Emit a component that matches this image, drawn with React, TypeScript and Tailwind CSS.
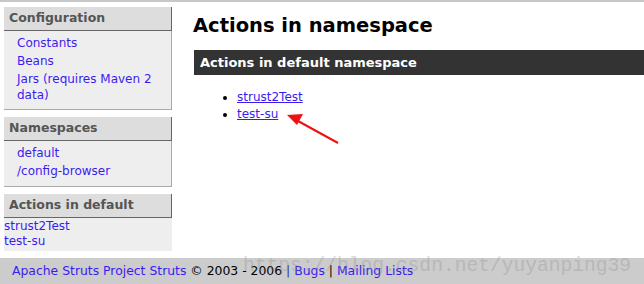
import React from "react";

const linkCls = "text-[#3b1cf0]";

function SideBox({ title, children, plain }: { title: string; children: React.ReactNode; plain?: boolean }) {
  return (
    <div>
      <div className="h-[24px] bg-[#dddddd] border-r border-b border-[#666666] pl-[5px] flex items-center text-[12.5px] font-bold text-[#555555]">
        {title}
      </div>
      <div
        className={
          plain
            ? "bg-[#eeeeee] pt-px pb-[2px]"
            : "bg-[#eeeeee] border-r border-b border-[#aaaaaa] pl-[13px] pt-[3px] pb-[6px]"
        }
      >
        {children}
      </div>
    </div>
  );
}

export default function App() {
  return (
    <div className="relative w-[644px] h-[284px] overflow-hidden bg-white font-['DejaVu_Sans',sans-serif] text-[12px]">
      <div className="h-[2px] bg-[#c8c8c8]" />
      <div className="flex">
        <aside className="ml-[4px] mt-[5px] w-[168px] flex flex-col gap-[7px]">
          <SideBox title="Configuration">
            <div className="leading-[18px]">
              <a className={`${linkCls} block`}>Constants</a>
              <a className={`${linkCls} block`}>Beans</a>
              <a className={`${linkCls} block leading-[16px] pt-px`}>Jars (requires Maven 2 data)</a>
            </div>
          </SideBox>
          <SideBox title="Namespaces">
            <div className="leading-[18px]">
              <a className={`${linkCls} block`}>default</a>
              <a className={`${linkCls} block`}>/config-browser</a>
            </div>
          </SideBox>
          <SideBox title="Actions in default" plain>
            <div className="leading-[15px]">
              <a className={`${linkCls} block`}>strust2Test</a>
              <a className={`${linkCls} block`}>test-su</a>
            </div>
          </SideBox>
        </aside>
        <main className="ml-[21px] flex-1">
          <h1 className="mt-[12px] text-[19.5px] leading-[24px] font-bold text-black">Actions in namespace</h1>
          <div className="mt-[12px] ml-px h-[25px] bg-[#333333] pl-[6px] flex items-center text-[13px] font-bold text-white">
            Actions in default namespace
          </div>
          <ul className="mt-[14px] ml-[27px] list-disc pl-[17px] leading-[17px]">
            <li><a className={`${linkCls} underline`}>strust2Test</a></li>
            <li><a className={`${linkCls} underline`}>test-su</a></li>
          </ul>
        </main>
      </div>
      <footer className="absolute left-0 right-0 bottom-0 h-[26px] bg-[#cccccc] pl-[12px] flex items-center text-[12.4px] text-black">
        <a className={linkCls}>Apache Struts Project Struts</a>
        <span>&nbsp;© 2003 - 2006&nbsp;</span>
        <span className="text-[#1a3a8a]">|</span>
        <a className={linkCls}>&nbsp;Bugs&nbsp;</a>
        <span>|</span>
        <a className={linkCls}>&nbsp;Mailing Lists</a>
      </footer>
      <div className="absolute left-[243px] top-[254px] font-['Liberation_Mono',monospace] text-[19.6px] leading-[24px] text-[#8a8a8a] opacity-30 pointer-events-none whitespace-nowrap">
        https://blog.csdn.net/yuyanping39
      </div>
      <svg className="absolute left-0 top-0 pointer-events-none" width="644" height="284">
        <line x1="338" y1="143" x2="298" y2="121" stroke="#ee1111" strokeWidth="2" />
        <polygon points="287,115 303,114 297,125" fill="#ee1111" />
      </svg>
    </div>
  );
}
